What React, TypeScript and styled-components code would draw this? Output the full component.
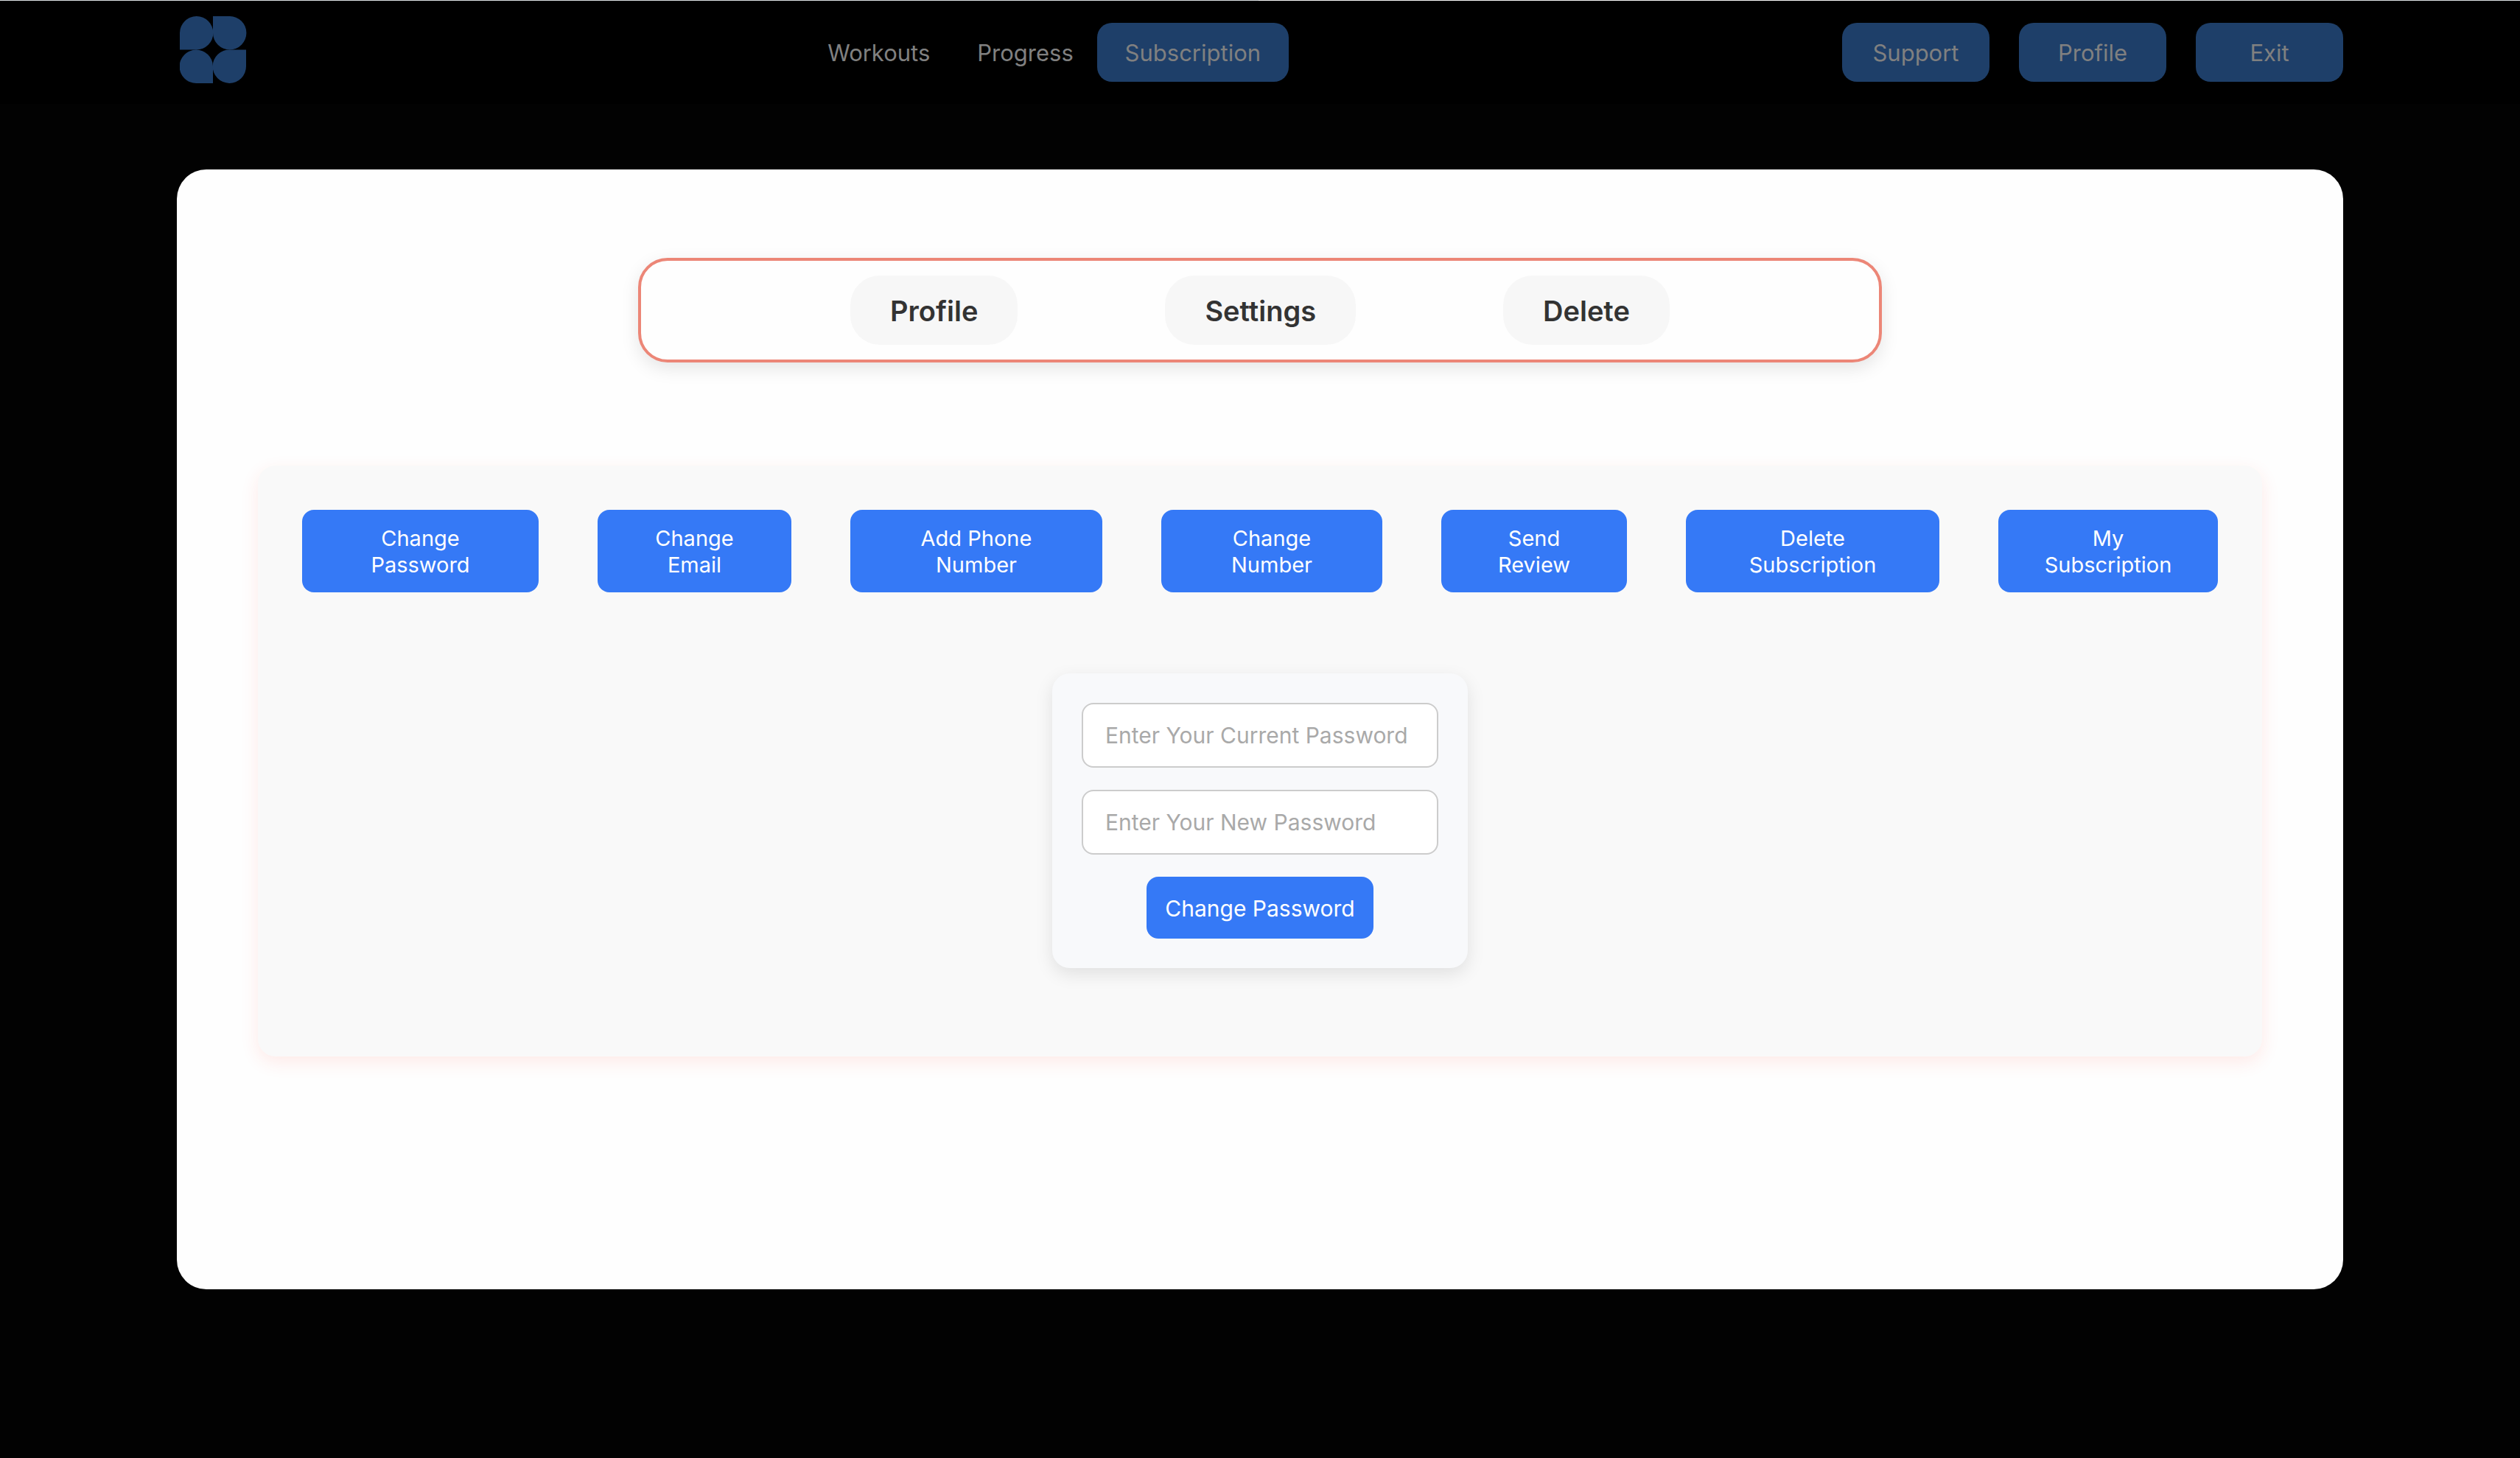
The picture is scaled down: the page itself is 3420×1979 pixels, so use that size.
import React, { useState } from "react";
import styled, { createGlobalStyle } from "styled-components";

const GlobalStyle = createGlobalStyle`
  *, *::before, *::after { box-sizing: border-box; }
  body {
    margin: 0;
    background: #020202;
    font-family: Inter, "Liberation Sans", sans-serif;
  }
  button, input { font-family: inherit; }
`;

const Page = styled.div`
  min-height: 100vh;
  display: flex;
  flex-direction: column;
  background: #020202;
`;

const TopEdge = styled.div`
  display: grid;
  grid-template-columns: 1708fr 857fr 855fr;
  height: 1px;
  background: #dfe3e6;
`;

const ActiveEdge = styled.div`
  grid-column: 2;
  background: #f8fafa;
`;

const Header = styled.header`
  display: flex;
  align-items: center;
  justify-content: space-between;
  height: 140px;
  padding: 0 240px;
  background: #000;
`;

const LogoLink = styled.a`
  display: flex;
  width: 100px;
  padding: 0 4px;
  margin-bottom: 6px;
`;

const Nav = styled.nav`
  display: flex;
  align-items: center;
`;

const NavLink = styled.a`
  padding: 2px 32px 0;
  color: #808080;
  font-size: 31px;
  line-height: 40px;
  text-decoration: none;
`;

const HeaderActions = styled.div`
  display: flex;
  gap: 40px;
`;

const HeaderButton = styled.button<{ $wide?: boolean }>`
  width: ${(p) => (p.$wide ? 260 : 200)}px;
  height: 80px;
  padding: 2px 0 0;
  border: 0;
  border-radius: 20px;
  background: #1e3f69;
  color: #808080;
  font-size: 31px;
  line-height: 40px;
`;

const Card = styled.main`
  display: flex;
  flex-direction: column;
  align-items: center;
  min-height: 1520px;
  margin: 89px 240px 0;
  padding: 120px 70px;
  border-radius: 40px;
  background: #fefefe;
`;

const Tabs = styled.div`
  box-sizing: content-box;
  display: flex;
  justify-content: center;
  gap: 200px;
  width: 60%;
  padding: 20px 0;
  border: 4px solid #ec8677;
  border-radius: 40px;
  background: #fefefe;
  box-shadow: 0 8px 24px rgba(0, 0, 0, 0.1);
`;

const TabButton = styled.button`
  height: 94px;
  padding: 2px 54px 0;
  border: 0;
  border-radius: 40px;
  background: #f7f7f7;
  color: #333;
  font-size: 38px;
  font-weight: 600;
  line-height: 48px;
`;

const Panel = styled.section`
  display: flex;
  flex-direction: column;
  align-items: center;
  align-self: stretch;
  gap: 110px;
  margin: 140px 40px 0;
  padding: 60px 60px 120px;
  border-radius: 24px;
  background: #f9f9f9;
  box-shadow: 0 8px 24px rgba(255, 60, 40, 0.1);
`;

const Actions = styled.div`
  display: grid;
  grid-template-columns: 321fr 263fr 342fr 300fr 252fr 344fr 298fr;
  gap: 80px;
  width: 100%;
`;

const ActionButton = styled.button`
  padding: 21px 60px 19px;
  border: 0;
  border-radius: 16px;
  background: #3579f6;
  color: #fff;
  font-size: 29px;
  line-height: 36px;
`;

const Form = styled.form`
  display: flex;
  flex-direction: column;
  align-items: center;
  gap: 30px;
  width: 564px;
  padding: 40px;
  border-radius: 24px;
  background: #f8f9fb;
  box-shadow: 0 8px 24px rgba(0, 0, 0, 0.1);
`;

const Field = styled.input`
  width: 100%;
  height: 88px;
  padding: 0 30px;
  border: 2px solid #ccc;
  border-radius: 16px;
  background: #fff;
  color: #333;
  font-size: 30px;
  &::placeholder {
    color: #a9a9a9;
    opacity: 1;
  }
`;

const SubmitButton = styled.button`
  height: 84px;
  padding: 2px 25px 0;
  border: 0;
  border-radius: 16px;
  background: #3579f6;
  color: #fff;
  font-size: 30px;
  line-height: 40px;
`;

const Logo = () => (
  <svg width="92" height="92" viewBox="0 0 92 92" fill="#1e3f69" aria-hidden="true">
    <path d="M0 45.5V22.7A22.7 22.7 0 1 1 22.7 45.5Z" />
    <path d="M45 0H67.5A22.7 22.7 0 1 1 45 22.7Z" />
    <path d="M45 91H22.5A22.7 22.7 0 1 1 45 68Z" />
    <path d="M90 45.5V68A22.7 22.7 0 1 1 68 45.5Z" />
  </svg>
);

const tabs = ["Profile", "Settings", "Delete"];

const actions = [
  "Change Password",
  "Change Email",
  "Add Phone Number",
  "Change Number",
  "Send Review",
  "Delete Subscription",
  "My Subscription",
];

export default function App() {
  const [current, setCurrent] = useState("");
  const [next, setNext] = useState("");

  return (
    <Page>
      <GlobalStyle />
      <TopEdge>
        <ActiveEdge />
      </TopEdge>
      <Header>
        <LogoLink href="#" aria-label="Home">
          <Logo />
        </LogoLink>
        <Nav>
          <NavLink href="#workouts">Workouts</NavLink>
          <NavLink href="#progress">Progress</NavLink>
          <HeaderButton type="button" $wide>Subscription</HeaderButton>
        </Nav>
        <HeaderActions>
          <HeaderButton type="button">Support</HeaderButton>
          <HeaderButton type="button">Profile</HeaderButton>
          <HeaderButton type="button">Exit</HeaderButton>
        </HeaderActions>
      </Header>
      <Card>
        <Tabs>
          {tabs.map((t) => (
            <TabButton key={t} type="button">{t}</TabButton>
          ))}
        </Tabs>
        <Panel>
          <Actions>
            {actions.map((a) => (
              <ActionButton key={a} type="button">{a}</ActionButton>
            ))}
          </Actions>
          <Form onSubmit={(e) => e.preventDefault()}>
            <Field
              type="password"
              aria-label="Current password"
              placeholder="Enter Your Current Password"
              value={current}
              onChange={(e) => setCurrent(e.target.value)}
            />
            <Field
              type="password"
              aria-label="New password"
              placeholder="Enter Your New Password"
              value={next}
              onChange={(e) => setNext(e.target.value)}
            />
            <SubmitButton type="submit">Change Password</SubmitButton>
          </Form>
        </Panel>
      </Card>
    </Page>
  );
}
